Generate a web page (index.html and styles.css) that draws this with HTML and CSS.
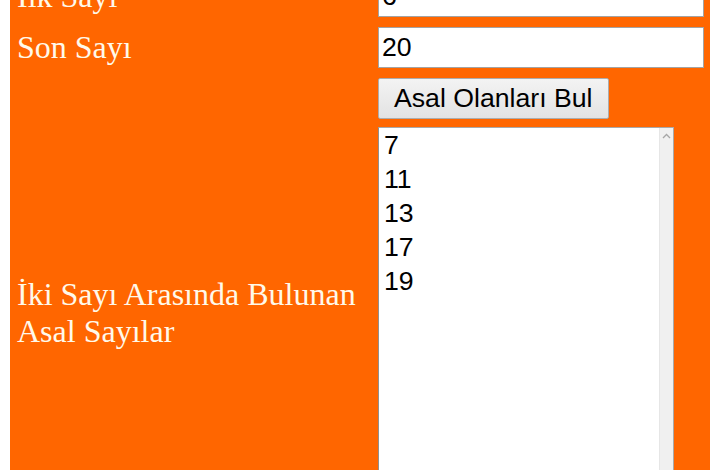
FILE: index.html
```html
<!DOCTYPE html>
<html lang="tr">
<head>
<meta charset="utf-8">
<title>Asal Sayılar</title>
<link rel="stylesheet" href="styles.css">
</head>
<body>
<div class="panel">
  <label class="label" for="ilk">İlk Sayı</label>
  <input class="field" id="ilk" type="text" value="6">

  <label class="label" for="son">Son Sayı</label>
  <input class="field" id="son" type="text" value="20">

  <span class="label"></span>
  <button class="btn" type="button">Asal Olanları Bul</button>

  <label class="label" for="sonuc">İki Sayı Arasında Bulunan Asal Sayılar</label>
  <div class="listbox">
    <textarea class="result" id="sonuc">7
11
13
17
19</textarea>
    <div class="scrollbar">
      <svg class="arrow" width="9" height="6" viewBox="0 0 9 6"><path d="M1 5 L4.5 1.5 L8 5" fill="none" stroke="#a6a6a6" stroke-width="1.3"/></svg>
    </div>
  </div>
</div>
</body>
</html>
```

FILE: styles.css
```css
html, body {
  margin: 0;
  padding: 0;
  background: #ffffff;
  overflow: hidden;
}

.panel {
  margin: -26px 0 0 10px;
  width: 700px;
  box-sizing: border-box;
  background: #ff6600;
  padding: 2px 6px 0 7px;
  display: grid;
  grid-template-columns: 361px 326px;
  row-gap: 10px;
  align-items: center;
}

.label {
  font-family: "Liberation Serif", "Times New Roman", serif;
  font-size: 32px;
  color: #fff9ea;
  line-height: 36.8px;
}

.field {
  box-sizing: border-box;
  width: 326px;
  height: 41px;
  margin: 0;
  padding: 0 3px;
  border: 1px solid #a3a3a3;
  background: #ffffff;
  font-family: "Liberation Sans", Arial, sans-serif;
  font-size: 26.67px;
  color: #000000;
  outline: none;
}

.btn {
  justify-self: start;
  box-sizing: border-box;
  height: 41px;
  margin: 0;
  padding: 0 15px;
  border: 1px solid #acacac;
  border-radius: 2px;
  background: linear-gradient(#f3f3f3, #e3e3e3);
  font-family: "Liberation Sans", Arial, sans-serif;
  font-size: 26.67px;
  color: #000000;
}

.listbox {
  box-sizing: border-box;
  width: 296px;
  height: 369px;
  margin-top: -2px;
  display: flex;
  border: 1px solid #a9a9a9;
  border-left-color: #8f8f8f;
  background: #ffffff;
}

.result {
  flex: 1;
  min-width: 0;
  margin: 0;
  padding: 0 5px;
  border: none;
  resize: none;
  outline: none;
  overflow: hidden;
  background: transparent;
  font-family: "Liberation Sans", Arial, sans-serif;
  font-size: 26.67px;
  line-height: 34px;
  color: #000000;
}

.scrollbar {
  width: 14px;
  flex: none;
  background: #f0f0f0;
  border-left: 1px solid #e6e6e6;
  display: flex;
  justify-content: center;
  align-items: flex-start;
  padding-top: 5px;
  box-sizing: border-box;
}

.arrow {
  display: block;
}
```
